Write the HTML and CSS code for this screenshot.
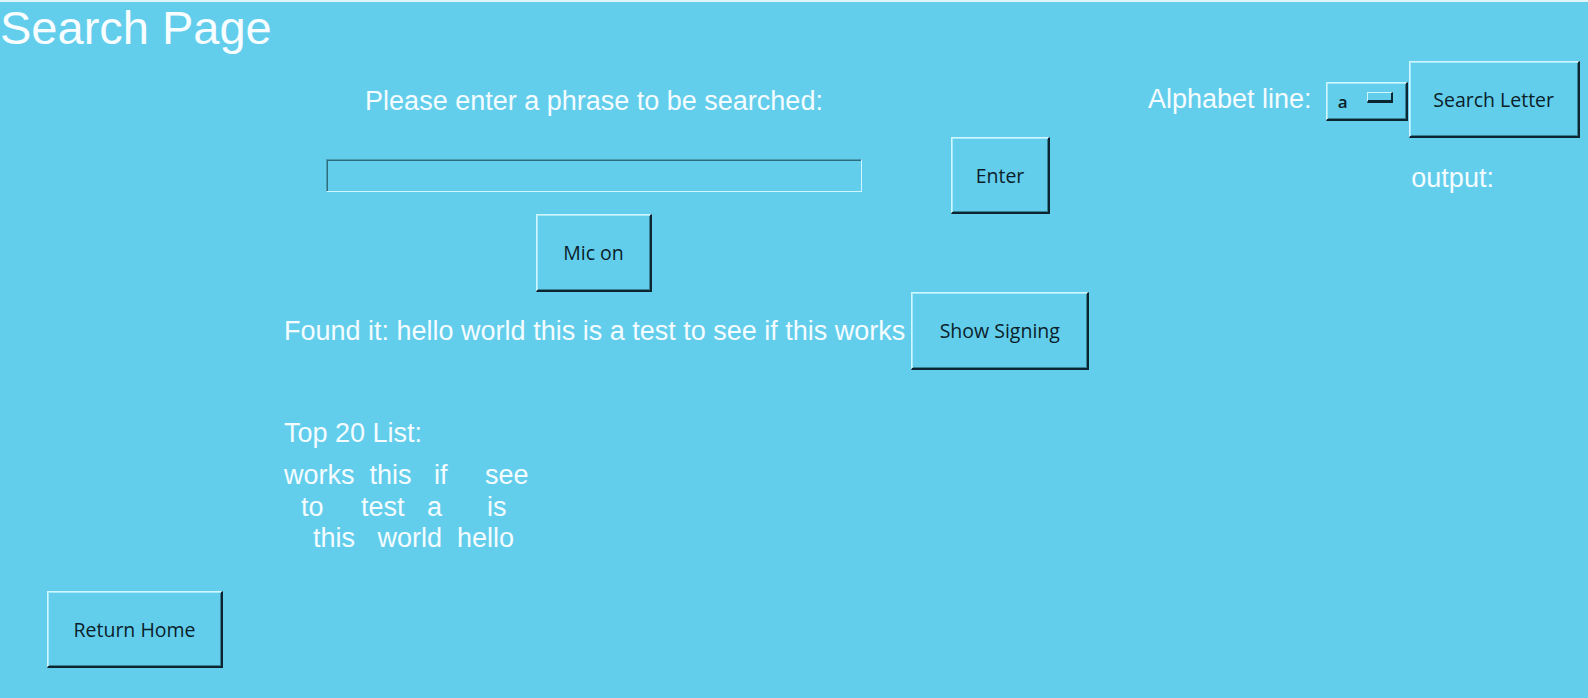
FILE: index.html
```html
<!DOCTYPE html>
<html lang="en">
<head>
<meta charset="utf-8">
<title>Search Page</title>
<link rel="stylesheet" href="styles.css">
</head>
<body>
<h1 class="title">Search Page</h1>
<div class="main">
  <section class="search">
    <p class="prompt">Please enter a phrase to be searched:</p>
    <div class="entry-row">
      <input class="entry" type="text" aria-label="phrase">
      <button class="btn btn-enter">Enter</button>
    </div>
    <div class="mic-row"><button class="btn btn-mic">Mic on</button></div>
    <div class="found-row">
      <span class="found">Found it: hello world this is a test to see if this works</span>
      <button class="btn btn-sign">Show Signing</button>
    </div>
    <p class="top-title">Top 20 List:</p>
    <div class="top-list">
      <div class="top-line l1">works  this   if     see</div>
      <div class="top-line l2">to     test   a      is</div>
      <div class="top-line l3">this   world  hello</div>
    </div>
  </section>
  <aside class="side">
    <span class="alpha-label">Alphabet line:</span>
    <div class="controls">
      <div class="option"><span class="option-text">a</span><span class="indicator"></span></div>
      <button class="btn btn-letter">Search Letter</button>
    </div>
    <span class="output">output:</span>
  </aside>
</div>
<div class="footer"><button class="btn btn-home">Return Home</button></div>
</body>
</html>
```

FILE: styles.css
```css
html, body {
  margin: 0;
  padding: 0;
}
body {
  width: 1588px;
  height: 698px;
  overflow: hidden;
  background: #63ceec;
  border-top: 2px solid #dff5fc;
  box-sizing: border-box;
  font-family: "Liberation Sans", Arial, sans-serif;
  color: #f4fcff;
}
.title {
  margin: 0;
  font-size: 47px;
  line-height: 52px;
  height: 50px;
  font-weight: normal;
  color: #f8fdff;
}
.main {
  display: flex;
  padding-left: 284px;
}
.search {
  width: 864px;
  flex: 0 0 auto;
  font-size: 27px;
  line-height: 31px;
}
.prompt {
  margin: 33.5px 0 0 42px;
  width: 536px;
  text-align: center;
}
.entry-row {
  display: flex;
  align-items: center;
  margin-top: 20.5px;
}
.entry {
  box-sizing: border-box;
  width: 536px;
  height: 33px;
  margin: 0 0 0 42px;
  background: #63ceec;
  border: 1px solid;
  border-color: #4b9bb1 #d0f6ff #d0f6ff #4b9bb1;
  box-shadow: inset 1px 1px #2d6d80;
  outline: none;
}
.btn {
  box-sizing: border-box;
  height: 77px;
  padding: 0;
  background: #63ceec;
  color: #0a1e2a;
  font-family: "Open Sans", "Noto Sans", sans-serif;
  font-size: 19.5px;
  font-weight: 500;
  border-style: solid;
  border-width: 1px 2px 2px 1px;
  border-color: #d2f6ff #0c2631 #0c2631 #d2f6ff;
  box-shadow: inset 1px 1px #a6e9f9, inset -1px -1px #3b8196;
  cursor: pointer;
}
.btn-enter { width: 99px; margin-left: 89px; }
.mic-row { padding-left: 252px; }
.btn-mic { width: 116px; height: 78px; }
.found-row {
  display: flex;
  align-items: center;
  gap: 6px;
}
.btn-sign { width: 178px; height: 78px; }
.top-title {
  margin: 48px 0 0 0;
}
.top-list {
  margin-top: 11px;
  line-height: 31.5px;
}
.top-line { white-space: pre; }
.l2 { padding-left: 17px; }
.l3 { padding-left: 29px; }

.side {
  display: grid;
  grid-template-columns: auto auto;
  column-gap: 14px;
  align-items: center;
  align-self: flex-start;
  margin-top: 9px;
  font-size: 27px;
  line-height: 31px;
}
.controls {
  display: flex;
  align-items: center;
  gap: 1px;
}
.option {
  box-sizing: border-box;
  width: 82px;
  height: 39px;
  margin-top: 4px;
  display: flex;
  align-items: center;
  padding: 0 13px 0 11px;
  border-style: solid;
  border-width: 1px 2px 2px 1px;
  border-color: #d2f6ff #0c2631 #0c2631 #d2f6ff;
  box-shadow: inset 1px 1px #a6e9f9, inset -1px -1px #3b8196;
  font-family: "Open Sans", "Noto Sans", sans-serif;
  font-size: 17px;
  font-weight: 600;
  color: #0a1e2a;
}
.indicator {
  box-sizing: border-box;
  width: 26px;
  height: 11px;
  margin-left: auto;
  margin-bottom: 8px;
  border-style: solid;
  border-width: 1px 2px 3px 1px;
  border-color: #d2f6ff #0c2631 #0c2631 #d2f6ff;
}
.btn-letter { width: 171px; }
.output {
  grid-column: 2;
  justify-self: center;
  margin-top: 24.5px;
}
.footer {
  margin-top: 36.5px;
  padding-left: 47px;
}
.btn-home { width: 176px; }
```
